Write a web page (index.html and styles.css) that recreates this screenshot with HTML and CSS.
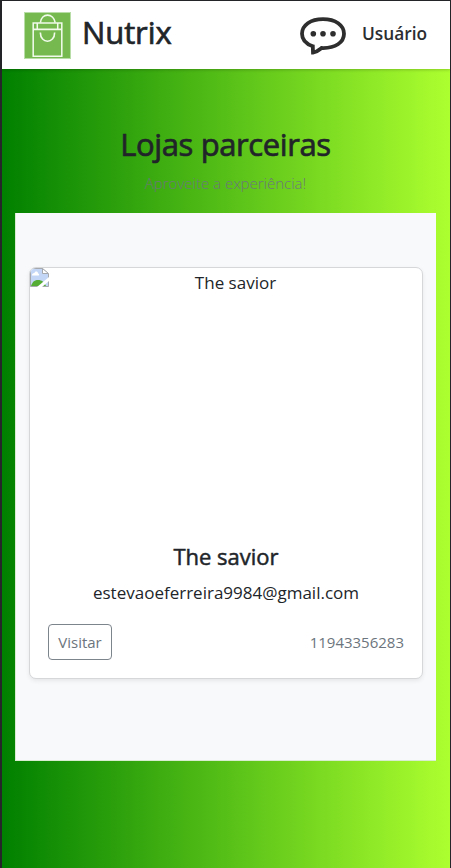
FILE: index.html
```html
<!DOCTYPE html>
<html lang="pt-BR">
<head>
<meta charset="utf-8">
<title>Nutrix</title>
<link rel="stylesheet" href="styles.css">
</head>
<body>
<div class="page">
  <header class="navbar">
    <svg class="logo" viewBox="0 0 46 46" fill="none" stroke="#f1faeb">
      <rect x="0.5" y="0.5" width="45" height="45" fill="#75b94f" stroke="#b9dda6"/>
      <path d="M9 10.8H37V17H9ZM9 17V43.3H37V17M13 11V17M33 11V17" stroke-width="1.5"/>
      <path d="M16 10.5C17 0.5 29 0.5 30.500 10.500M16 20C16 31.500 30 31.500 30 20" stroke-width="1.600"/>
    </svg>
    <span class="brand">Nutrix</span>
    <svg class="chat" viewBox="0 0 48 40">
      <path d="M24 3.200C11.500 3.200 3 9.300 3 17.800C3 23.500 7 28 13.800 30.200L14 36.500C18.500 36 20.500 33.500 22.500 32C36.500 32.500 45 26.300 45 17.800C45 9.300 36.500 3.200 24 3.200Z" fill="none" stroke="#2e2e2e" stroke-width="3.800"/>
      <g fill="#2e2e2e"><circle cx="14.300" cy="17.700" r="2.800"/><circle cx="24" cy="17.700" r="2.800"/><circle cx="34" cy="17.700" r="2.800"/></g>
    </svg>
    <span class="user">Usuário</span>
  </header>
  <main>
    <h1 class="title">Lojas parceiras</h1>
    <p class="lead">Aproveite a experiência!</p>
    <section class="album">
      <article class="card">
        <div class="picture">
          <svg class="broken" viewBox="0 0 19 19">
            <path d="M0.500 0.500H12.500L18.500 6V18.500H0.500Z" fill="#c3d6f6" stroke="#a5a8ad"/>
            <path d="M12.500 0.500V5.500H18.500Z" fill="#fff" stroke="#a5a8ad"/>
            <path d="M2 7.500C2 5 4 5.300 4.500 5C5 3 8 3 8 5.500C9.500 5.500 9.500 7.500 8.500 7.500Z" fill="#fff"/>
            <path d="M1 18C2.500 13.500 5 12 8 12C12 12 14 14 16 18Z" fill="#55ad35"/>
            <path d="M7 19L19 9V13L12 19Z" fill="#fff"/>
          </svg>
          <span class="alt">The savior</span>
        </div>
        <div class="card-body">
          <h2 class="name">The savior</h2>
          <p class="email">estevaoeferreira9984@gmail.com</p>
          <div class="actions">
            <button class="visit">Visitar</button>
            <span class="phone">11943356283</span>
          </div>
        </div>
      </article>
    </section>
  </main>
</div>
</body>
</html>
```
FILE: styles.css
```css
* { box-sizing: border-box; }
body {
  margin: 0;
  font-family: "Open Sans", "Noto Sans", sans-serif;
  color: #212529;
  background: #25262a;
}
h1, h2, p { margin: 0; white-space: nowrap; }
.page {
  height: 868px;
  border: solid #25262a;
  border-width: 1px 1px 0 2px;
  background: linear-gradient(90deg, #008000, #adff2f);
}
.navbar {
  height: 68px;
  display: flex;
  align-items: flex-start;
  padding: 0 23px 0 22px;
  background: #fff;
  box-shadow: 0 1px 3px rgba(0, 0, 0, .2);
}
.logo { width: 47px; height: 47px; margin-top: 11px; }
.brand, .title, .name { font-weight: 400; -webkit-text-stroke: .7px #212529; }
.brand { margin: 9px 0 0 11px; font-size: 31px; line-height: 44px; letter-spacing: -.1px; }
.chat { width: 48px; height: 40px; margin: 15px 15px 0 auto; }
.user { margin-top: 20px; font-size: 17.3px; line-height: 26px; font-weight: 600; color: #2b2d31; }
main { padding: 53px 14px 0 13px; text-align: center; }
.title { font-size: 31px; line-height: 44px; letter-spacing: -.4px; }
.lead { margin-top: 5px; font-size: 15px; line-height: 24px; font-weight: 300; color: #6c757d; }
.album {
  margin-top: 18px;
  height: 548px;
  padding: 54px 13px 0;
  border: solid #d8edd0;
  border-width: 0 0 1px 1px;
  background: #f8f9fb;
}
.card {
  height: 412px;
  border: 1px solid #d5d7d9;
  border-radius: 7px;
  background: #fff;
  box-shadow: 0 2px 4px rgba(0, 0, 0, .075);
  overflow: hidden;
}
.picture { display: flex; height: 257px; }
.broken { width: 19px; height: 19px; }
.alt { flex: 1; padding-top: 1px; font-size: 17px; line-height: 27px; }
.card-body { padding: 18px 18px 0; }
.name { font-size: 22px; line-height: 27px; -webkit-text-stroke-width: .5px; }
.email { margin-top: 9px; font-size: 17px; line-height: 27px; }
.actions { display: flex; justify-content: space-between; align-items: center; margin-top: 18px; color: #6c757d; font-size: 15px; }
.visit { width: 64px; height: 36px; padding: 0; border: 1px solid #7d858c; border-radius: 4px; background: #fff; color: inherit; font: inherit; }
```
